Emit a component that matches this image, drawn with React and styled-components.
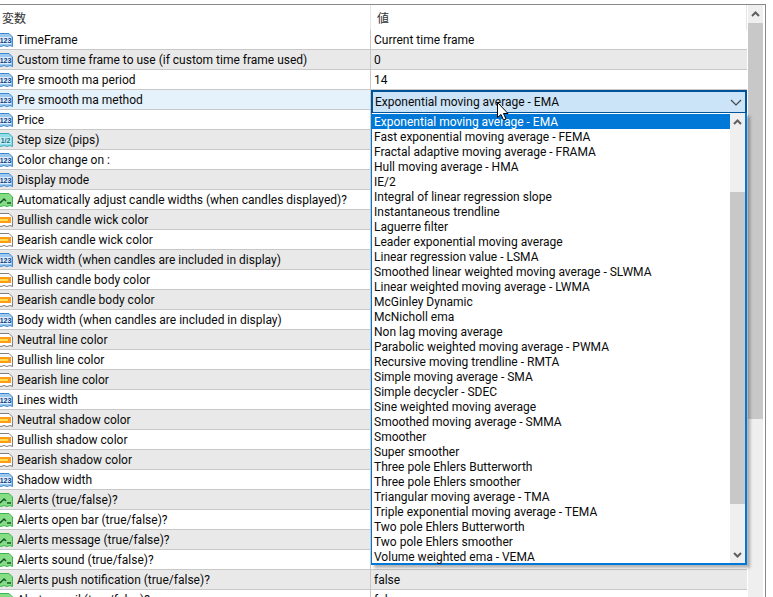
import React from "react";
import styled, { createGlobalStyle } from "styled-components";

const GlobalStyle = createGlobalStyle`
  html, body {
    margin: 0;
    padding: 0;
    background: #fff;
  }
  body {
    font-family: Roboto, "Noto Sans CJK JP", sans-serif;
    font-size: 12px;
    color: #0a0a0a;
  }
`;

const params = [
  ["TimeFrame", "num", "Current time frame"],
  ["Custom time frame to use (if custom time frame used)", "num", "0"],
  ["Pre smooth ma period", "num", "14"],
  ["Pre smooth ma method", "num", ""],
  ["Price", "num", ""],
  ["Step size (pips)", "half", ""],
  ["Color change on :", "num", ""],
  ["Display mode", "num", ""],
  ["Automatically adjust candle widths (when candles displayed)?", "flag", ""],
  ["Bullish candle wick color", "color", ""],
  ["Bearish candle wick color", "color", ""],
  ["Wick width (when candles are included in display)", "num", ""],
  ["Bullish candle body color", "color", ""],
  ["Bearish candle body color", "color", ""],
  ["Body width (when candles are included in display)", "num", ""],
  ["Neutral line color", "color", ""],
  ["Bullish line color", "color", ""],
  ["Bearish line color", "color", ""],
  ["Lines width", "num", ""],
  ["Neutral shadow color", "color", ""],
  ["Bullish shadow color", "color", ""],
  ["Bearish shadow color", "color", ""],
  ["Shadow width", "num", ""],
  ["Alerts (true/false)?", "flag", ""],
  ["Alerts open bar (true/false)?", "flag", ""],
  ["Alerts message (true/false)?", "flag", ""],
  ["Alerts sound (true/false)?", "flag", ""],
  ["Alerts push notification (true/false)?", "flag", "false"],
  ["Alerts email (true/false)?", "flag", "false"],
];

const methods = [
  "Exponential moving average - EMA",
  "Fast exponential moving average - FEMA",
  "Fractal adaptive moving average - FRAMA",
  "Hull moving average - HMA",
  "IE/2",
  "Integral of linear regression slope",
  "Instantaneous trendline",
  "Laguerre filter",
  "Leader exponential moving average",
  "Linear regression value - LSMA",
  "Smoothed linear weighted moving average - SLWMA",
  "Linear weighted moving average - LWMA",
  "McGinley Dynamic",
  "McNicholl ema",
  "Non lag moving average",
  "Parabolic weighted moving average - PWMA",
  "Recursive moving trendline - RMTA",
  "Simple moving average - SMA",
  "Simple decycler - SDEC",
  "Sine weighted moving average",
  "Smoothed moving average - SMMA",
  "Smoother",
  "Super smoother",
  "Three pole Ehlers Butterworth",
  "Three pole Ehlers smoother",
  "Triangular moving average - TMA",
  "Triple exponential moving average - TEMA",
  "Two pole Ehlers Butterworth",
  "Two pole Ehlers smoother",
  "Volume weighted ema - VEMA",
];

const Page = styled.div`
  width: 773px;
  height: 597px;
  overflow: hidden;
  padding-top: 4px;
  box-sizing: border-box;
  position: relative;
`;

const Frame = styled.div`
  width: 766px;
  height: 604px;
  box-sizing: border-box;
  border-top: 1px solid #888;
  border-right: 1px solid #888;
  display: flex;
  overflow: hidden;
`;

const Table = styled.div`
  width: 747px;
  flex: none;
`;

const HeaderRow = styled.div`
  height: 25px;
  display: grid;
  grid-template-columns: 371px 1fr;
  border-right: 1px solid #e6e6e6;
  box-sizing: border-box;
  font-family: "Noto Sans CJK JP", "Noto Sans", sans-serif;
  color: #333;
`;

const HeaderCell = styled.div`
  display: flex;
  align-items: center;
  padding-left: ${(p) => p.$pad}px;
  border-right: ${(p) => (p.$divided ? "1px solid #e6e6e6" : "none")};
`;

const Row = styled.div`
  height: 20px;
  box-sizing: border-box;
  display: grid;
  grid-template-columns: 371px 1fr;
  border-bottom: 1px solid #c8c8c8;
  background: ${(p) => (p.$active ? "#e5f1fb" : p.$odd ? "#e9e9e9" : "#fff")};
`;

const NameCell = styled.div`
  display: flex;
  align-items: center;
  gap: 4px;
  border-right: 1px solid #c8c8c8;
  white-space: nowrap;
  overflow: hidden;
  padding-top: 1px;
`;

const ValueCell = styled.div`
  display: flex;
  align-items: center;
  padding: 1px 0 0 3px;
`;

const IconSvg = styled.svg`
  width: 16px;
  height: 16px;
  flex: none;
  margin-left: -3px;
`;

const ScrollBar = styled.div`
  width: ${(p) => p.$width}px;
  flex: none;
  display: flex;
  flex-direction: column;
  background: #efefef;
`;

const MainScroll = styled(ScrollBar)`
  margin-left: 1px;
`;

const ScrollButton = styled.div`
  height: ${(p) => p.$height}px;
  flex: none;
  display: flex;
  align-items: center;
  justify-content: center;
`;

const Thumb = styled.div`
  height: ${(p) => p.$height}px;
  flex: none;
  background: #c8c8c8;
`;

const Spacer = styled.div`
  height: ${(p) => p.$height}px;
  flex: ${(p) => (p.$height ? "none" : "1")};
`;

const Dropdown = styled.div`
  position: absolute;
  left: 371px;
  top: 90px;
  width: 376px;
`;

const Combo = styled.div`
  height: 23px;
  box-sizing: border-box;
  border: 2px solid #005499;
  border-bottom-width: 1px;
  background: #cce4f7;
  display: flex;
  align-items: center;
  justify-content: space-between;
  padding: 0 1px 1px 2px;
`;

const ListBox = styled.div`
  height: 452px;
  box-sizing: border-box;
  border: 1px solid #0078d7;
  border-top: none;
  border-right-width: 2px;
  border-bottom-width: 2px;
  background: #fff;
  display: flex;
  box-shadow: 3px 3px 3px rgba(0, 0, 0, 0.3);
`;

const Items = styled.div`
  flex: 1;
  padding-top: 1px;
`;

const Item = styled.div`
  height: 15px;
  line-height: 17px;
  padding-left: 2px;
  white-space: nowrap;
  background: ${(p) => (p.$selected ? "#0078d7" : "transparent")};
  color: ${(p) => (p.$selected ? "#fff" : "#0a0a0a")};
`;

const Cursor = styled.svg`
  position: absolute;
  left: 497px;
  top: 102px;
  width: 12px;
  height: 19px;
`;

const docPath = "M1 1.5H12L15.5 5V14.5L13 13.5L10 14.5L7 13.5L4 14.5L1 13.5Z";

const TypeIcon = ({ kind }) => {
  if (kind === "color") {
    return (
      <IconSvg viewBox="0 0 16 16">
        <path d={docPath} fill="#fff" stroke="#808080" />
        <rect x="1" y="5" width="13" height="6" fill="#ff9a1a" />
        <rect x="3" y="7" width="8" height="2" fill="#ffe14d" />
      </IconSvg>
    );
  }
  if (kind === "flag") {
    return (
      <IconSvg viewBox="0 0 16 16">
        <path d={docPath} fill="#86dd86" stroke="#3eb34f" />
        <path d="M3 11L7 7L9 9" fill="none" stroke="#14532a" strokeWidth="1.5" />
        <path d="M10 11H14" stroke="#14532a" strokeWidth="1.5" />
      </IconSvg>
    );
  }
  const half = kind === "half";
  return (
    <IconSvg viewBox="0 0 16 16">
      <path d={docPath} fill={half ? "#8fdde6" : "#9cc9f0"} stroke={half ? "#3fa9bc" : "#3f86cc"} />
      <rect x="2" y="5" width="12" height="7" fill={half ? "#bfedf2" : "#dcecfa"} />
      <text
        x="8.5"
        y="11"
        textAnchor="middle"
        fontSize="7"
        fontWeight="700"
        fontFamily="Liberation Sans, sans-serif"
        fill={half ? "#1f6f8a" : "#123f80"}
      >
        {half ? "1/2" : "123"}
      </text>
    </IconSvg>
  );
};

const Chevron = ({ up }) => (
  <svg width="9" height="6" viewBox="0 0 9 6">
    <path d={up ? "M1 5L4.5 1.5L8 5" : "M1 1L4.5 4.5L8 1"} fill="none" stroke="#606060" strokeWidth="2" />
  </svg>
);

const App = () => {
  return (
    <>
      <GlobalStyle />
      <Page>
        <Frame>
          <Table>
            <HeaderRow>
              <HeaderCell $pad={2} $divided>変数</HeaderCell>
              <HeaderCell $pad={6}>値</HeaderCell>
            </HeaderRow>
            {params.map(([name, kind, value], i) => (
              <Row key={name} $odd={i % 2 === 1} $active={i === 3}>
                <NameCell>
                  <TypeIcon kind={kind} />
                  {name}
                </NameCell>
                <ValueCell>{value}</ValueCell>
              </Row>
            ))}
          </Table>
          <MainScroll $width={15}>
            <ScrollButton $height={18}>
              <Chevron up />
            </ScrollButton>
            <Thumb $height={396} />
            <Spacer />
            <ScrollButton $height={17}>
              <Chevron />
            </ScrollButton>
          </MainScroll>
        </Frame>
        <Dropdown>
          <Combo>
            {methods[0]}
            <svg width="16" height="16" viewBox="0 0 16 16">
              <path d="M3 6L8 11L13 6" fill="none" stroke="#444" strokeWidth="1.2" />
            </svg>
          </Combo>
          <ListBox>
            <Items>
              {methods.map((m, i) => (
                <Item key={m} $selected={i === 0}>{m}</Item>
              ))}
            </Items>
            <ScrollBar $width={15}>
              <ScrollButton $height={17}>
                <Chevron up />
              </ScrollButton>
              <Spacer $height={62} />
              <Thumb $height={312} />
              <Spacer />
              <ScrollButton $height={17}>
                <Chevron />
              </ScrollButton>
            </ScrollBar>
          </ListBox>
        </Dropdown>
        <Cursor viewBox="0 0 12 19">
          <path d="M0.5 0.5V15.5L4 12.5L6.5 18L9 17L6.5 11.5H11Z" fill="#fff" stroke="#000" />
        </Cursor>
      </Page>
    </>
  );
};

export default App;
